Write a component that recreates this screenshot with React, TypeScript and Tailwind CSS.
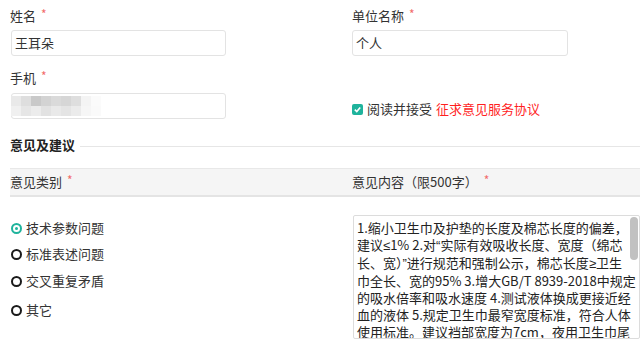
import React from "react";

const Star = ({ cls = "ml-[5px]" }: { cls?: string }) => (
  <span className={`${cls} text-[#f26b6b] text-[12px] relative top-[-2px]`}>*</span>
);

const mosaicTop = ["#e9e9e9", "#dedede", "#c9c9c9", "#d3d3d3", "#dadada", "#d6d6d6", "#dedede", "#f4f4f4", "#fbfbfb"];
const mosaicBot = ["#f0f0f0", "#e6e6e6", "#ececec", "#e2e2e2", "#e9e9e9", "#e4e4e4", "#ebebeb", "#f6f6f6", "#fafafa"];

const Radio = ({ checked, label, h }: { checked?: boolean; label: string; h: string }) => (
  <div className={`flex items-center ${h}`}>
    {checked ? (
      <span className="w-[11px] h-[11px] rounded-full border-[2px] border-[#1fb39c] flex items-center justify-center ml-[1px]">
        <span className="w-[3px] h-[3px] rounded-full bg-[#1fb39c]" />
      </span>
    ) : (
      <span className="w-[11px] h-[11px] rounded-full border-[2px] border-[#1a1a1a] ml-[1px]" />
    )}
    <span className="ml-[4px]">{label}</span>
  </div>
);

const L = ({ children }: { children: React.ReactNode }) => (
  <span className="font-['Liberation_Sans',sans-serif]">{children}</span>
);

export default function App() {
  return (
    <div className="w-[640px] h-[342px] overflow-hidden bg-white text-[13px] text-[#333] font-['Microsoft_YaHei','Noto_Sans_CJK_SC',sans-serif]">
      <div className="grid grid-cols-[342px_1fr] pl-[10px] pt-[6px]">
        <div className="flex flex-col">
          <div className="h-[20px] leading-[20px] flex items-center">
            姓名<Star />
          </div>
          <div className="mt-[4px] ml-[1px] w-[215px] h-[26px] border border-[#e3e3e3] rounded-[3px] flex items-center px-[3px]">
            王耳朵
          </div>
          <div className="mt-[12px] h-[20px] leading-[20px] flex items-center">
            手机<Star />
          </div>
          <div className="mt-[5px] ml-[1px] w-[215px] h-[26px] border border-[#e3e3e3] rounded-[3px] flex flex-col justify-center">
            <div className="flex -ml-[1px]">
              {mosaicTop.map((c, i) => (
                <span key={i} className="w-[10px] h-[10px]" style={{ background: c }} />
              ))}
            </div>
            <div className="flex -ml-[1px]">
              {mosaicBot.map((c, i) => (
                <span key={i} className="w-[10px] h-[10px]" style={{ background: c }} />
              ))}
            </div>
          </div>
        </div>
        <div className="flex flex-col">
          <div className="h-[20px] leading-[20px] flex items-center">
            单位名称<Star />
          </div>
          <div className="mt-[4px] w-[216px] h-[26px] border border-[#e3e3e3] rounded-[3px] flex items-center px-[3px]">
            个人
          </div>
          <div className="mt-[43px] h-[20px] flex items-center">
            <span className="w-[11px] h-[11px] rounded-[2px] bg-[#1fb39c] flex items-center justify-center">
              <svg width="9" height="9" viewBox="0 0 10 10">
                <path d="M2 5.2 L4.2 7.3 L8 2.8" stroke="white" strokeWidth="1.8" fill="none" />
              </svg>
            </span>
            <span className="ml-[4px]">阅读并接受</span>
            <span className="ml-[4px] text-[#ff1f1f]">征求意见服务协议</span>
          </div>
        </div>
      </div>

      <div className="mt-[16px] pl-[10px] h-[20px] flex items-center">
        <span className="font-bold text-[#222]">意见及建议</span>
        <span className="ml-[5px] flex-1 h-px bg-[#e6e6e6] mt-[3px]" />
      </div>

      <div className="mt-[13px] ml-[10px] h-[29px] bg-[#f5f5f5] border-t border-t-[#e8e8e8] border-b-[2px] border-b-[#e4e4e4] grid grid-cols-[342px_1fr] items-center">
        <div className="flex items-center">
          意见类别<Star />
        </div>
        <div className="flex items-center">
          意见内容（限500字）<Star cls="ml-[6px]" />
        </div>
      </div>

      <div className="grid grid-cols-[343px_1fr] pl-[10px]">
        <div className="pt-[18px] flex flex-col">
          <Radio checked label="技术参数问题" h="h-[26px]" />
          <Radio label="标准表述问题" h="h-[26px]" />
          <Radio label="交叉重复矛盾" h="h-[28px]" />
          <Radio label="其它" h="h-[30px]" />
        </div>
        <div className="pt-[18px]">
          <div className="relative w-[287px] h-[124px] border border-[#dcdcdc] rounded-[2px] overflow-hidden pl-[3px] pt-[3px] leading-[17px] text-[#222]">
            <div className="whitespace-nowrap">1.缩小卫生巾及护垫的长度及棉芯长度的偏差，</div>
            <div className="whitespace-nowrap">
              建议<L>≤</L>1% 2.对<L>“</L>实际有效吸收长度、宽度（绵芯
            </div>
            <div className="whitespace-nowrap">
              长、宽）<L>”</L>进行规范和强制公示，棉芯长度<L>≥</L>卫生
            </div>
            <div className="whitespace-nowrap">巾全长、宽的95% 3.增大GB/T 8939-2018中规定</div>
            <div className="whitespace-nowrap">的吸水倍率和吸水速度 4.测试液体换成更接近经</div>
            <div className="whitespace-nowrap">血的液体 5.规定卫生巾最窄宽度标准，符合人体</div>
            <div className="whitespace-nowrap">使用标准。建议裆部宽度为7cm，夜用卫生巾尾</div>
            <span className="absolute right-[1px] top-[1px] w-[8px] h-[43px] rounded-[4px] bg-[#c1c1c1]" />
          </div>
        </div>
      </div>
    </div>
  );
}
